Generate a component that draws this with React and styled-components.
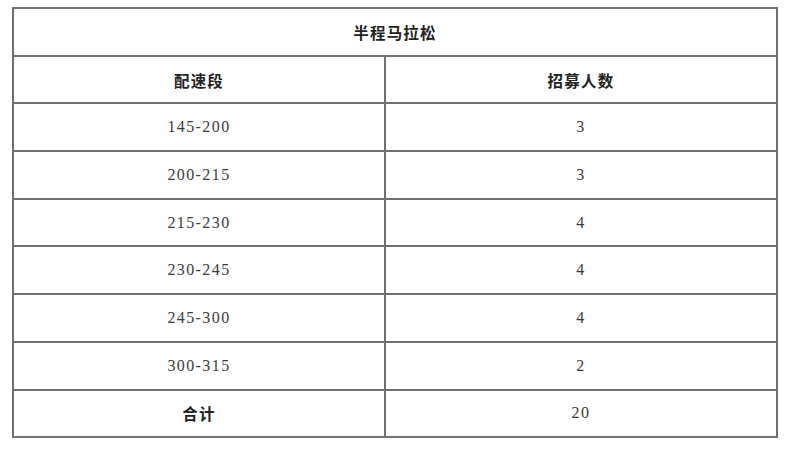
import React from "react";
import styled, { createGlobalStyle } from "styled-components";

const GlobalStyle = createGlobalStyle`
  body {
    margin: 0;
    background: #ffffff;
    font-family: "Noto Sans CJK SC", "Noto Sans", sans-serif;
  }
`;

const Page = styled.div`
  width: 800px;
  height: 449px;
  padding: 7px 0 0 12px;
  box-sizing: border-box;
`;

const Table = styled.table`
  width: 766px;
  border-collapse: collapse;
  table-layout: fixed;
  border: 2px solid #707070;
`;

const Row = styled.tr`
  height: 47.7px;
`;

const Cell = styled.td`
  border: 2px solid #707070;
  padding: 0;
  text-align: center;
  vertical-align: middle;
  color: ${(p) => (p.$bold ? "#222" : "#3a3a3a")};
  font-family: ${(p) =>
    p.$bold
      ? `"Noto Sans CJK SC", "Noto Sans", sans-serif`
      : `"Liberation Serif", "Noto Sans CJK SC", serif`};
  font-weight: ${(p) => (p.$bold ? 700 : 400)};
  font-size: ${(p) => (p.$bold ? "15.5px" : "16px")};
  letter-spacing: ${(p) => (p.$bold ? "1.2px" : "1.4px")};
`;

const rows = [
  ["145-200", "3"],
  ["200-215", "3"],
  ["215-230", "4"],
  ["230-245", "4"],
  ["245-300", "4"],
  ["300-315", "2"],
];

export default function App() {
  return (
    <Page>
      <GlobalStyle />
      <Table>
        <colgroup>
          <col style={{ width: "372px" }} />
          <col />
        </colgroup>
        <tbody>
          <Row>
            <Cell $bold colSpan={2}>半程马拉松</Cell>
          </Row>
          <Row>
            <Cell $bold>配速段</Cell>
            <Cell $bold>招募人数</Cell>
          </Row>
          {rows.map(([pace, count]) => (
            <Row key={pace}>
              <Cell>{pace}</Cell>
              <Cell>{count}</Cell>
            </Row>
          ))}
          <Row>
            <Cell $bold>合计</Cell>
            <Cell>20</Cell>
          </Row>
        </tbody>
      </Table>
    </Page>
  );
}
